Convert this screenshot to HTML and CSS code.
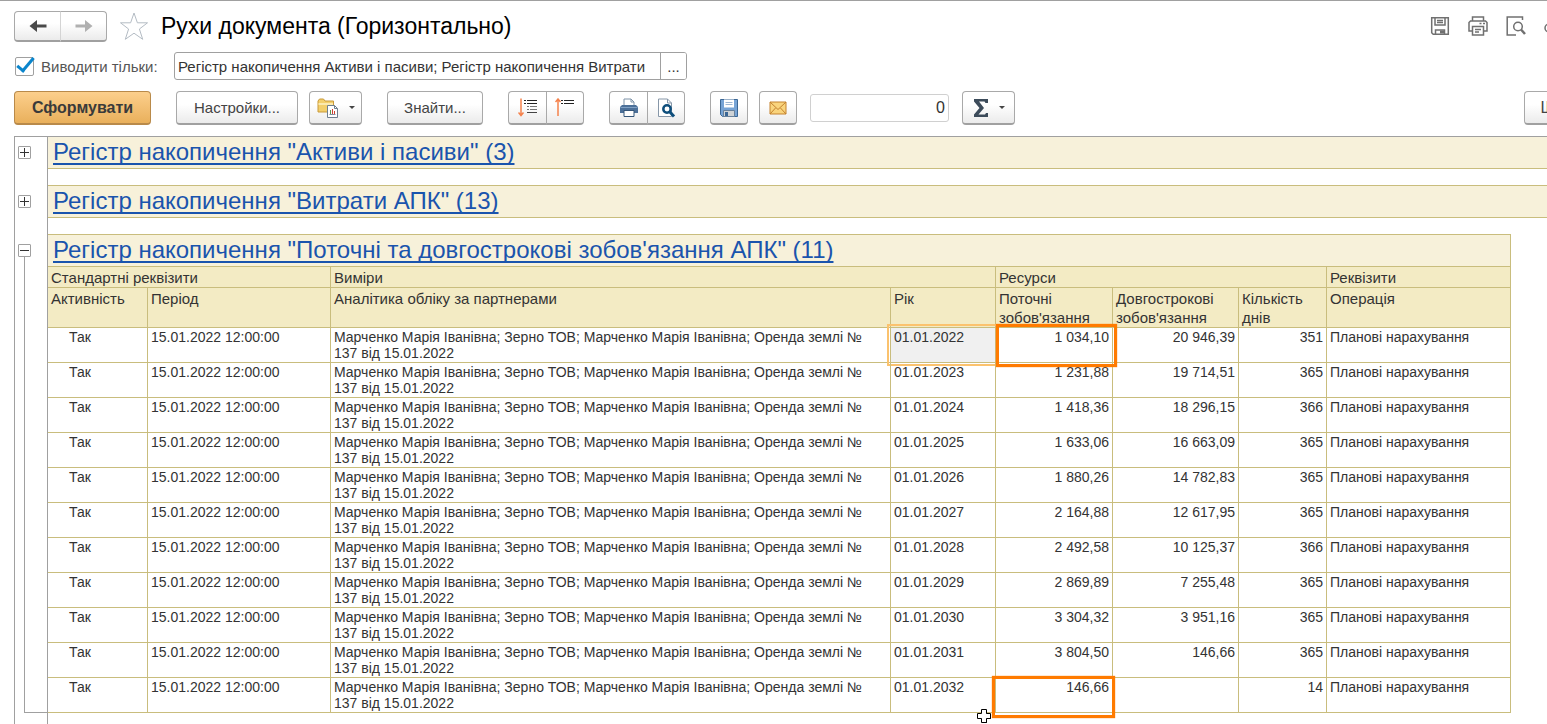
FILE: index.html
```html
<!DOCTYPE html>
<html lang="uk">
<head>
    <meta charset="UTF-8">
    <title>Рухи документа (Горизонтально)</title>
    <link rel="stylesheet" href="styles.css">
</head>
<body>
<div class="window">
    <header class="titlebar">
        <div class="btn-group nav">
            <button class="btn" aria-label="Назад"><svg width="18" height="14" viewBox="0 0 18 14"><path d="M0.500 7l7.500-6v4.500h9.500v3H8V13z" fill="#4a4a4a"/></svg></button>
            <button class="btn" aria-label="Вперед"><svg width="18" height="14" viewBox="0 0 18 14"><path d="M17.500 7L10 1v4.500H0.500v3H10V13z" fill="#b0b0b0"/></svg></button>
        </div>
        <svg class="star" width="30" height="30" viewBox="0 0 30 30"><path d="M15 2l3.400 9.800h10.100l-8.100 6.200 3.300 10.300L15 22.200l-8.700 6.100L9.600 18 1.500 11.800h10.100z" fill="#fff" stroke="#b4bcc4"/></svg>
        <h1>Рухи документа (Горизонтально)</h1>
        <div class="title-icons">
            <svg width="20" height="20" viewBox="0 0 20 20" fill="none" stroke="#707070" stroke-width="1.500"><path d="M1.700 1.700h16.600v16.600H3.200l-1.500-1.500z"/><path d="M5 2v7h10V2M7 4.500h6M7 6.500h6"/><path d="M5.500 18v-4h9v4"/><path d="M10 14.500h4v3h-4z" fill="#707070" stroke="none"/></svg>
            <svg width="20" height="20" viewBox="0 0 20 20" fill="none" stroke="#707070" stroke-width="1.500"><path d="M4.500 5V1h11v4M4.500 15H1V6.500L2.500 5h15L19 6.500V15h-3.500"/><path d="M4.500 10.500h11v8.500h-11zM7 13.500h6M7 16h4"/><path d="M11.500 7.500h2M15 7.500h2"/></svg>
            <svg width="20" height="20" viewBox="0 0 20 20" fill="none" stroke="#707070" stroke-width="1.500"><path d="M16.500 4V1H1.200v18H10"/><circle cx="12" cy="10.500" r="4.300"/><path d="M15 13.500l4 4.500" stroke-width="2.500"/></svg>
            <svg width="20" height="20" viewBox="0 0 20 20" fill="none" stroke="#707070" stroke-width="1.500"><path d="M9 8H5a4 4 0 0 0 0 8h4M11 8h4a4 4 0 0 1 0 8h-4M6 12h8"/></svg>
        </div>
    </header>

    <div class="filter">
        <input type="checkbox" id="only" checked>
        <label for="only">Виводити тільки:</label>
        <div class="picker">
            <input type="text" aria-label="Регістри" value="Регістр накопичення Активи і пасиви; Регістр накопичення Витрати">
            <button aria-label="Вибрати">...</button>
        </div>
    </div>

    <div class="toolbar">
        <button class="btn primary">Сформувати</button>
        <button class="btn settings">Настройки...</button>
        <button class="btn drop" aria-label="Варіанти звіту">
            <svg width="22" height="22" viewBox="0 0 22 22"><path d="M1 15V4l1.500-2h4L8 4h8.500v11z" fill="#f3cf6b" stroke="#c99a3b"/><path d="M1.500 7H16" stroke="#fbe9ae" stroke-width="2"/><path d="M10.500 8.500h7l3 3v9h-10z" fill="#fff" stroke="#6f7f8f"/><path d="M17.500 8.500v3h3" fill="none" stroke="#6f7f8f"/><path d="M13.500 17v-4" stroke="#5a9a50"/><path d="M15.500 17v-5M17.500 17v-3" stroke="#d04030"/><path d="M12.500 17.500h6" stroke="#8090a0"/></svg>
            <i class="caret"></i>
        </button>
        <button class="btn find">Знайти...</button>
        <div class="btn-group">
            <button class="btn" aria-label="Розгорнути групи"><svg width="20" height="20" viewBox="0 0 20 20" fill="none"><path d="M3 0.500v17M0.500 14.500L3 17.500l2.500-3" stroke="#f5824c" stroke-width="1.500"/><path d="M6 2.500h2M9 2.500h10M6 5.500h2M9 5.500h10" stroke="#222"/><path d="M9 8.500h2M12 8.500h7M9 11.500h2M12 11.500h7" stroke="#777"/><path d="M9 14.500h10" stroke="#444"/></svg></button>
            <button class="btn" aria-label="Згорнути групи"><svg width="20" height="20" viewBox="0 0 20 20" fill="none"><path d="M3 18V1M0.500 4L3 1l2.500 3" stroke="#f5824c" stroke-width="1.500"/><path d="M6 2.500h2M9 2.500h10M6 5.500h2M9 5.500h10" stroke="#222"/></svg></button>
        </div>
        <div class="btn-group">
            <button class="btn" aria-label="Друк"><svg width="20" height="20" viewBox="0 0 20 20"><path d="M5 8V1h7l3 3v4" fill="#fff" stroke="#7f93a8"/><path d="M12 1v3h3" fill="none" stroke="#7f93a8"/><path d="M3 7h14l2 2v6H1V9z" fill="#4c7099"/><path d="M1.500 9.500h17" stroke="#7fa0c4"/><path d="M5 12.500h10v6H5z" fill="#fff" stroke="#355679"/></svg></button>
            <button class="btn" aria-label="Попередній перегляд"><svg width="20" height="20" viewBox="0 0 20 20"><path d="M2.500 1h9l4 4v13.500h-13z" fill="#fff" stroke="#8797a8"/><path d="M11.500 1v4h4" fill="none" stroke="#8797a8"/><circle cx="11" cy="11" r="3.700" fill="#fff" stroke="#0f4f7c" stroke-width="2.500"/><path d="M13.500 13.500l4.500 5" stroke="#0f4f7c" stroke-width="3"/></svg></button>
        </div>
        <button class="btn icon" aria-label="Зберегти"><svg width="20" height="20" viewBox="0 0 20 20"><path d="M1.500 1.500h17v17h-15l-2-2z" fill="#77a4d6" stroke="#3b6795"/><path d="M5 1.500h10v8H5z" fill="#fff"/><path d="M6.500 4.500h7M6.500 6.500h7" stroke="#9db6d2"/><path d="M4.500 12.500h11v6h-11z" fill="#cfd3d6" stroke="#68819b"/><path d="M6 14h3v4H6z" fill="#3b6795"/></svg></button>
        <button class="btn icon mail" aria-label="Надіслати"><svg width="18" height="14" viewBox="0 0 18 14"><path d="M1 1h16v12H1z" fill="#f9d47d" stroke="#c4822f"/><path d="M1 1l8 7.500L17 1M1 13l5.500-6M17 13l-5.500-6" fill="none" stroke="#c4822f"/></svg></button>
        <input class="sum" type="text" aria-label="Сума" value="0">
        <button class="btn drop" aria-label="Показники">
            <svg width="16" height="20" viewBox="0 0 16 20"><path d="M1 1h14v4h-2.500l-1-1.500H6L11 10l-5.500 6.500h6.500l1-1.500h2v4H1v-2.500L6.500 10 1 3.500z" fill="#3c4b5a"/></svg>
            <i class="caret"></i>
        </button>
        <button class="btn more">Ще</button>
    </div>

    <main class="sheet">
        <section class="group">
            <div class="gutter"><button class="toggle" aria-label="Розгорнути"></button></div>
            <div class="body"><h2><a href="#">Регістр накопичення "Активи і пасиви" (3)</a></h2></div>
        </section>
        <section class="group">
            <div class="gutter"><button class="toggle" aria-label="Розгорнути"></button></div>
            <div class="body"><h2><a href="#">Регістр накопичення "Витрати АПК" (13)</a></h2></div>
        </section>
        <section class="group">
            <div class="gutter"><button class="toggle open" aria-label="Згорнути"></button><div class="branch"></div></div>
            <div class="body narrow">
                <h2><a href="#">Регістр накопичення "Поточні та довгострокові зобов'язання АПК" (11)</a></h2>
                <table>
                    <colgroup><col class="c-active"><col class="c-period"><col class="c-analytics"><col class="c-year"><col class="c-current"><col class="c-long"><col class="c-days"><col class="c-operation"></colgroup>
                    <thead>
                        <tr><th colspan="2">Стандартні реквізити</th><th colspan="2">Виміри</th><th colspan="3">Ресурси</th><th>Реквізити</th></tr>
                        <tr><th>Активність</th><th>Період</th><th>Аналітика обліку за партнерами</th><th>Рік</th><th>Поточні зобов'язання</th><th>Довгострокові зобов'язання</th><th>Кількість днів</th><th>Операція</th></tr>
                    </thead>
                    <tbody>
                        <tr><td>Так</td><td>15.01.2022 12:00:00</td><td>Марченко Марія Іванівна; Зерно ТОВ; Марченко Марія Іванівна; Оренда землі №<br>137 від 15.01.2022</td><td class="selected">01.01.2022</td><td class="marked first">1 034,10</td><td>20 946,39</td><td>351</td><td>Планові нарахування</td></tr>
                        <tr><td>Так</td><td>15.01.2022 12:00:00</td><td>Марченко Марія Іванівна; Зерно ТОВ; Марченко Марія Іванівна; Оренда землі №<br>137 від 15.01.2022</td><td>01.01.2023</td><td>1 231,88</td><td>19 714,51</td><td>365</td><td>Планові нарахування</td></tr>
                        <tr><td>Так</td><td>15.01.2022 12:00:00</td><td>Марченко Марія Іванівна; Зерно ТОВ; Марченко Марія Іванівна; Оренда землі №<br>137 від 15.01.2022</td><td>01.01.2024</td><td>1 418,36</td><td>18 296,15</td><td>366</td><td>Планові нарахування</td></tr>
                        <tr><td>Так</td><td>15.01.2022 12:00:00</td><td>Марченко Марія Іванівна; Зерно ТОВ; Марченко Марія Іванівна; Оренда землі №<br>137 від 15.01.2022</td><td>01.01.2025</td><td>1 633,06</td><td>16 663,09</td><td>365</td><td>Планові нарахування</td></tr>
                        <tr><td>Так</td><td>15.01.2022 12:00:00</td><td>Марченко Марія Іванівна; Зерно ТОВ; Марченко Марія Іванівна; Оренда землі №<br>137 від 15.01.2022</td><td>01.01.2026</td><td>1 880,26</td><td>14 782,83</td><td>365</td><td>Планові нарахування</td></tr>
                        <tr><td>Так</td><td>15.01.2022 12:00:00</td><td>Марченко Марія Іванівна; Зерно ТОВ; Марченко Марія Іванівна; Оренда землі №<br>137 від 15.01.2022</td><td>01.01.2027</td><td>2 164,88</td><td>12 617,95</td><td>365</td><td>Планові нарахування</td></tr>
                        <tr><td>Так</td><td>15.01.2022 12:00:00</td><td>Марченко Марія Іванівна; Зерно ТОВ; Марченко Марія Іванівна; Оренда землі №<br>137 від 15.01.2022</td><td>01.01.2028</td><td>2 492,58</td><td>10 125,37</td><td>366</td><td>Планові нарахування</td></tr>
                        <tr><td>Так</td><td>15.01.2022 12:00:00</td><td>Марченко Марія Іванівна; Зерно ТОВ; Марченко Марія Іванівна; Оренда землі №<br>137 від 15.01.2022</td><td>01.01.2029</td><td>2 869,89</td><td>7 255,48</td><td>365</td><td>Планові нарахування</td></tr>
                        <tr><td>Так</td><td>15.01.2022 12:00:00</td><td>Марченко Марія Іванівна; Зерно ТОВ; Марченко Марія Іванівна; Оренда землі №<br>137 від 15.01.2022</td><td>01.01.2030</td><td>3 304,32</td><td>3 951,16</td><td>365</td><td>Планові нарахування</td></tr>
                        <tr><td>Так</td><td>15.01.2022 12:00:00</td><td>Марченко Марія Іванівна; Зерно ТОВ; Марченко Марія Іванівна; Оренда землі №<br>137 від 15.01.2022</td><td>01.01.2031</td><td>3 804,50</td><td>146,66</td><td>365</td><td>Планові нарахування</td></tr>
                        <tr><td>Так</td><td>15.01.2022 12:00:00</td><td>Марченко Марія Іванівна; Зерно ТОВ; Марченко Марія Іванівна; Оренда землі №<br>137 від 15.01.2022</td><td>01.01.2032</td><td class="marked last">146,66<svg class="cursor" width="16" height="16" viewBox="0 0 16 16"><path d="M6 2h5v4h4v5h-4v4H6v-4H2V6h4z"/><path d="M5.500 1.500h5v4h4v5h-4v4h-5v-4h-4v-5h4z" fill="#fff" stroke="#000"/></svg></td><td></td><td>14</td><td>Планові нарахування</td></tr>
                    </tbody>
                </table>
            </div>
        </section>
    </main>
</div>
</body>
</html>
```
FILE: styles.css
```css
*,*::before,*::after{
    box-sizing: border-box;
}
body,html{
    margin: 0;
    padding: 0;
    height: 100%;
    background-color: #fff;
}
body,button,input{
    font-family: "Liberation Sans", Arial, sans-serif;
    font-size: 15px;
    color: #333;
}
.window{
    display: flex;
    flex-direction: column;
    height: 100vh;
    overflow: hidden;
    border-top: 1px solid #a0a0a0;
}
.titlebar{
    display: flex;
    align-items: center;
    flex: none;
    height: 50px;
    padding-left: 14px;
    margin-right: -17px;
}
h1{
    margin: 0 auto 0 12px;
    font-size: 23px;
    font-weight: normal;
    color: #000;
}
.star{
    margin-left: 12px;
}
.title-icons{
    display: flex;
    gap: 18px;
}
.btn{
    display: flex;
    align-items: center;
    justify-content: center;
    flex: none;
    height: 34px;
    padding: 0;
    border: 1px solid #a9a9a9;
    border-bottom: 2px solid #a0a0a0;
    border-radius: 4px;
    background: linear-gradient(#fff 40%, #ebebeb);
    color: #444;
}
.btn-group{
    display: flex;
}
.btn-group .btn{
    width: 39px;
}
.btn-group .btn:first-child{
    border-radius: 4px 0 0 4px;
}
.btn-group .btn:last-child{
    width: 38px;
    margin-left: -1px;
    border-radius: 0 4px 4px 0;
}
.btn-group.nav .btn{
    width: 47px;
    height: 31px;
}
.nav .btn:last-child{
    border-left-color: #d4d4d4;
}

.filter{
    display: flex;
    align-items: center;
    flex: none;
    height: 30px;
    padding-left: 15px;
    color: #555;
}
.filter label{
    width: 133px;
}
.filter input[type=checkbox]{
    appearance: none;
    width: 19px;
    height: 19px;
    margin: 0 7px 0 0;
    border: 1px solid #a0a0a0;
    border-radius: 2px;
    position: relative;
}
.filter input[type=checkbox]:checked::after{
    content: "";
    position: absolute;
    left: 5px;
    top: -4px;
    width: 9px;
    height: 18px;
    border: solid #0a85cc;
    border-width: 0 3px 3px 0;
    transform: rotate(40deg);
}
.picker{
    display: flex;
    width: 513px;
    height: 28px;
    border: 1px solid #a0a0a0;
    border-radius: 3px;
    overflow: hidden;
}
.picker input{
    flex: 1;
    min-width: 0;
    padding: 0;
    margin: 0 3px;
    border: 0;
}
.picker button{
    width: 26px;
    padding: 0;
    border: 0;
    border-left: 1px solid #a0a0a0;
    background-color: #fff;
}

.toolbar{
    display: flex;
    align-items: flex-start;
    flex: none;
    height: 55px;
    padding: 10px 0 0 14px;
    margin-right: -34px;
}
.toolbar .btn-group,.toolbar > .btn{
    margin-right: 25px;
}
.toolbar .primary{
    width: 137px;
    border-color: #b98a4a;
    background: linear-gradient(#fccf8c, #e9b05c);
    font-size: 16px;
    font-weight: bold;
    color: #3a3a3a;
}
.toolbar .settings{
    width: 122px;
    margin-right: 11px;
}
.toolbar .drop{
    width: 53px;
    gap: 10px;
}
.toolbar .find{
    width: 96px;
}
.toolbar .icon{
    width: 38px;
    margin-right: 11px;
}
.toolbar .mail{
    margin-right: 13px;
}
.toolbar .more{
    width: 57px;
    margin: 0 0 0 auto;
    font-size: 16px;
}
.caret{
    border: 3px solid transparent;
    border-top-color: #444;
    border-bottom: 0;
}
.sum{
    width: 139px;
    height: 28px;
    margin: 3px 13px 0 0;
    padding: 0 3px;
    border: 1px solid #d0d0d0;
    border-radius: 3px;
    font-size: 16px;
    text-align: right;
}

.sheet{
    flex: 1;
    display: flex;
    flex-direction: column;
    margin-left: 14px;
    border-top: 1px solid #a0a0a0;
    border-left: 1px solid #a0a0a0;
}
/* the line between gutter and cells goes on below the last group */
.sheet::after{
    content: "";
    flex: 1;
    width: 33px;
    border-right: 1px solid #a0a0a0;
}
.group{
    display: flex;
    flex: none;
}
.gutter{
    display: flex;
    flex-direction: column;
    flex: none;
    width: 33px;
    padding-top: 10px;
    border-right: 1px solid #a0a0a0;
}
.toggle{
    flex: none;
    width: 13px;
    height: 13px;
    margin-left: 3px;
    padding: 0;
    border: 1px solid #a0a0a0;
    border-radius: 1px;
    background: linear-gradient(#333,#333) center/9px 1px no-repeat, linear-gradient(#333,#333) center/1px 9px no-repeat, #fff;
}
.toggle.open{
    background: linear-gradient(#333,#333) center/9px 1px no-repeat, #fff;
}
.branch{
    flex: 1;
    margin-left: 9px;
    border-left: 1px solid #a0a0a0;
    border-bottom: 1px solid #a0a0a0;
}
.body{
    flex: 1;
    padding-bottom: 16px;
}
h2{
    height: 33px;
    margin: 0;
    padding-left: 5px;
    border-top: 1px solid #c9bd7d;
    border-bottom: 1px solid #c9bd7d;
    background-color: #f7f1da;
    font-size: 24px;
    font-weight: normal;
    line-height: 30px;
}
.group:first-child .gutter{
    padding-top: 9px;
}
.group:first-child h2{
    height: 32px;
    border-top: 0;
}
h2 a{
    color: #1a54ad;
    text-decoration-thickness: 2px;
    text-underline-offset: 3px;
    text-decoration-skip-ink: none;
}
.body.narrow{
    flex: none;
    padding-bottom: 0;
}
.narrow h2{
    border-right: 1px solid #c9bd7d;
}

table{
    width: 1463px;
    table-layout: fixed;
    border-collapse: separate;
    border-spacing: 0;
}
.c-active{width: 100px;}
.c-period{width: 183px;}
.c-analytics{width: 560px;}
.c-year{width: 105px;}
.c-current{width: 117px;}
.c-long{width: 126px;}
.c-days{width: 88px;}
.c-operation{width: 184px;}
th,td{
    padding: 1px 3px 0;
    border-right: 1px solid #c9bd7d;
    border-bottom: 1px solid #c9bd7d;
    text-align: left;
    vertical-align: top;
    font-weight: normal;
}
th{
    background-color: #f3ebc4;
    font-size: 15px;
    line-height: 19px;
}
td{
    position: relative;
    height: 35px;
    font-size: 14px;
    line-height: 16px;
    white-space: nowrap;
}
td:first-child{
    padding-left: 21px;
}
td:nth-child(5),td:nth-child(6),td:nth-child(7){
    text-align: right;
}
.selected{
    background-color: #f0f0f0;
}
.selected::after{
    content: "";
    position: absolute;
    inset: -4px;
    border: 2px solid #fbc26e;
}
.marked::after{
    content: "";
    position: absolute;
    z-index: 1;
    border: 3px solid #ff7b00;
    box-shadow: 0 0 1px #ff7b00;
}
.first::after{
    inset: -4px -5px -5px 0;
}
.last::after{
    inset: -2px -3px -6px -4px;
}
.cursor{
    position: absolute;
    left: -20px;
    top: 30px;
}
```
